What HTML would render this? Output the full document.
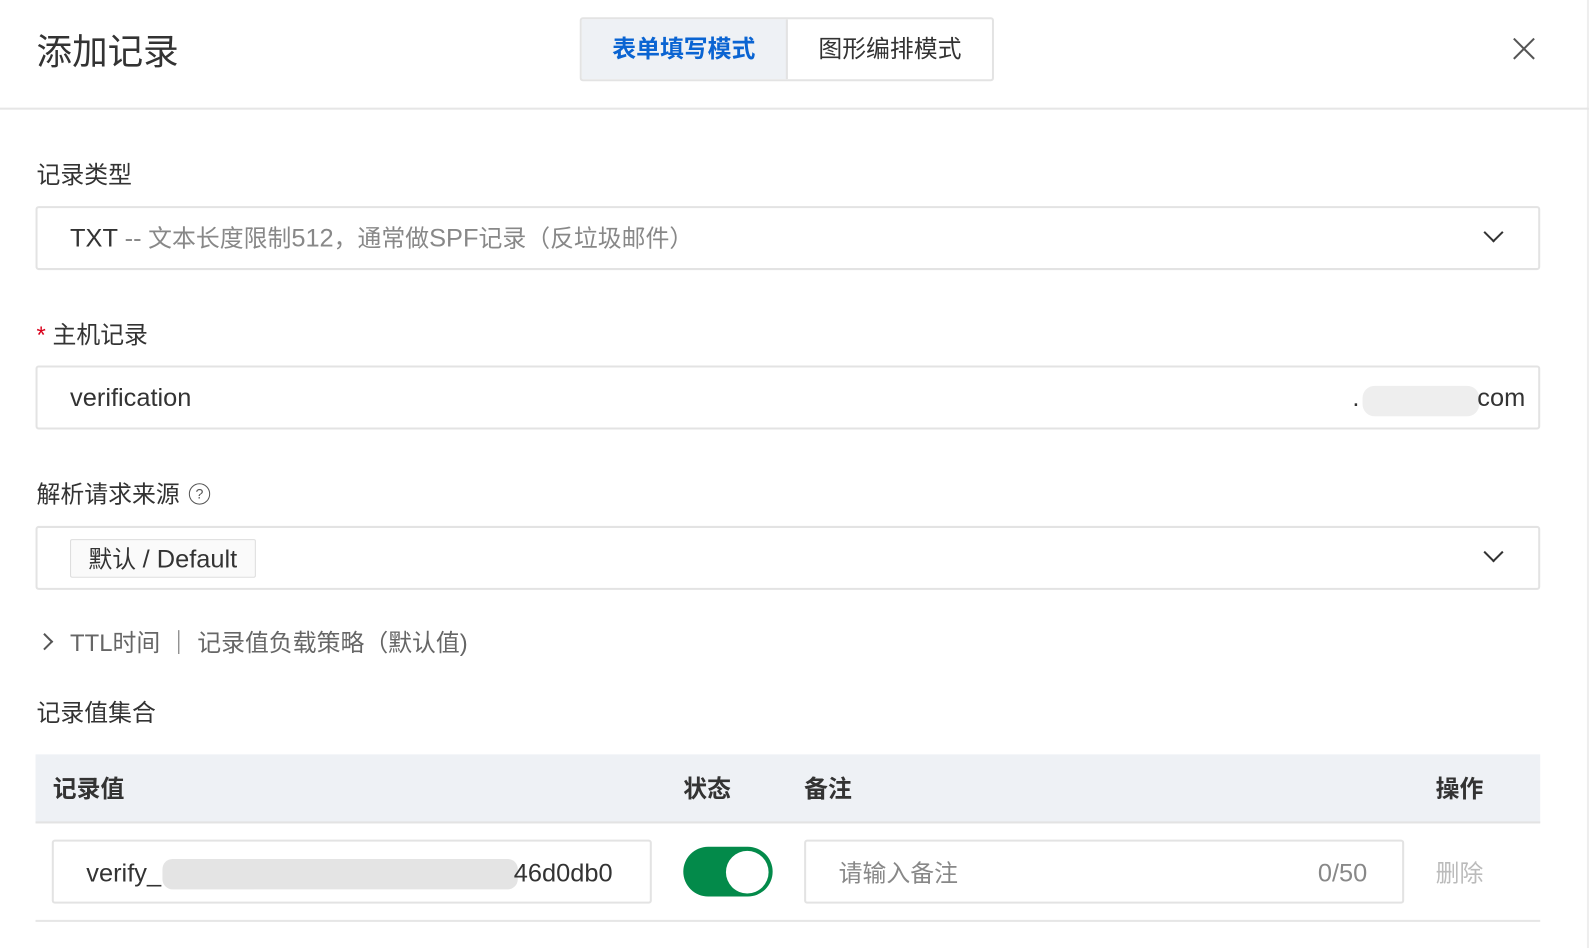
<!DOCTYPE html>
<html><head><meta charset="utf-8"><style>
*{box-sizing:border-box;margin:0;padding:0}
body{width:1592px;height:934px;background:#fff;font-family:"Liberation Sans","Noto Sans CJK SC",sans-serif;color:#333;position:relative;overflow:hidden}
#w{position:absolute;left:0;top:0;width:1568px;height:920px;transform:scale(1.0153);transform-origin:0 0}
.a{position:absolute}
.box{position:absolute;border:2px solid #e3e3e3;border-radius:3px;background:#fff}
.lbl{position:absolute;font-size:23.5px;color:#333}
.l{font-size:25px}
.chev{position:absolute;width:14px;height:14px;border-right:2px solid #333;border-bottom:2px solid #333;transform:rotate(45deg)}
</style></head><body><div id="w">
<div class="a" style="left:1563px;top:0;width:2px;height:934px;background:#eee"></div>
<div class="a" style="left:36px;top:23px;font-size:35px;color:#333">添加记录</div>
<div class="a" style="left:571px;top:17px;width:408px;height:63px;border:2px solid #e3e3e3;border-radius:3px;overflow:hidden;display:flex">
 <div style="width:203px;background:#eef1f5;border-right:2px solid #e3e3e3;color:#0a64d2;font-weight:bold;font-size:23.5px;text-align:center;line-height:59px">表单填写模式</div>
 <div style="flex:1;font-size:23.5px;text-align:center;line-height:59px;color:#333">图形编排模式</div>
</div>
<svg class="a" style="left:1490px;top:37px" width="22" height="22"><path d="M1 1L21 21M21 1L1 21" stroke="#555" stroke-width="2"/></svg>
<div class="a" style="left:0;top:106px;width:1565px;height:2px;background:#e6e6e6"></div>

<div class="lbl" style="left:36px;top:153px">记录类型</div>
<div class="box" style="left:35px;top:203px;width:1482px;height:63px"></div>
<div class="a" style="left:69px;top:216px;font-size:23.5px;color:#333"><span class="l">TXT</span> <span style="color:#888"><span class="l">--</span> 文本长度限制<span class="l">512</span>，通常做<span class="l">SPF</span>记录（反垃圾邮件）</span></div>
<div class="chev" style="left:1464px;top:222px"></div>

<div class="lbl" style="left:36px;top:311px"><span style="color:#d9001b">*</span> 主机记录</div>
<div class="box" style="left:35px;top:360px;width:1482px;height:63px"></div>
<div class="a l" style="left:69px;top:378px">verification</div>
<div class="a l" style="left:1332px;top:378px">.</div>
<div class="a" style="left:1342px;top:380px;width:115px;height:30px;background:#eee;border-radius:12px"></div>
<div class="a l" style="left:1455px;top:378px">com</div>

<div class="lbl" style="left:36px;top:468px">解析请求来源</div>
<div class="a" style="left:186px;top:476px;width:21px;height:21px;border:1.5px solid #555;border-radius:50%;font-size:14px;text-align:center;line-height:18px;color:#555">?</div>
<div class="box" style="left:35px;top:518px;width:1482px;height:63px"></div>
<div class="a" style="left:69px;top:531px;width:183px;height:38px;border:1px solid #ddd;border-radius:2px;background:#fafafa;font-size:23.5px;line-height:38px;padding-left:17px">默认 <span class="l">/ Default</span></div>
<div class="chev" style="left:1464px;top:537px"></div>

<div class="a" style="left:38px;top:626px;width:12px;height:12px;border-right:2px solid #555;border-bottom:2px solid #555;transform:rotate(-45deg)"></div>
<div class="a" style="left:69px;top:614px;font-size:23.5px;color:#666">TTL时间 ｜ 记录值负载策略（默认值)</div>

<div class="lbl" style="left:36px;top:683px">记录值集合</div>
<div class="a" style="left:35px;top:743px;width:1482px;height:68px;background:#eef1f5;border-bottom:2px solid #e3e3e3"></div>
<div class="a" style="left:52px;top:758px;font-size:23.5px;font-weight:bold;color:#333">记录值</div>
<div class="a" style="left:673px;top:758px;font-size:23.5px;font-weight:bold">状态</div>
<div class="a" style="left:792px;top:758px;font-size:23.5px;font-weight:bold">备注</div>
<div class="a" style="left:1414px;top:758px;font-size:23.5px;font-weight:bold">操作</div>

<div class="box" style="left:51px;top:827px;width:591px;height:63px"></div>
<div class="a l" style="left:85px;top:846px">verify_</div>
<div class="a" style="left:160px;top:846px;width:350px;height:30px;background:#e4e4e4;border-radius:10px"></div>
<div class="a l" style="left:506px;top:846px">46d0db0</div>
<div class="a" style="left:673px;top:834px;width:88px;height:49px;background:#038a4a;border-radius:25px"></div>
<div class="a" style="left:715px;top:838px;width:42px;height:42px;background:#fff;border-radius:50%"></div>
<div class="box" style="left:792px;top:827px;width:591px;height:63px"></div>
<div class="a" style="left:826px;top:841px;font-size:23.5px;color:#888">请输入备注</div>
<div class="a l" style="left:1298px;top:846px;color:#888">0/50</div>
<div class="a" style="left:1414px;top:841px;font-size:23.5px;color:#bbb">删除</div>
<div class="a" style="left:35px;top:906px;width:1482px;height:2px;background:#e6e6e6"></div>
</div></body></html>
